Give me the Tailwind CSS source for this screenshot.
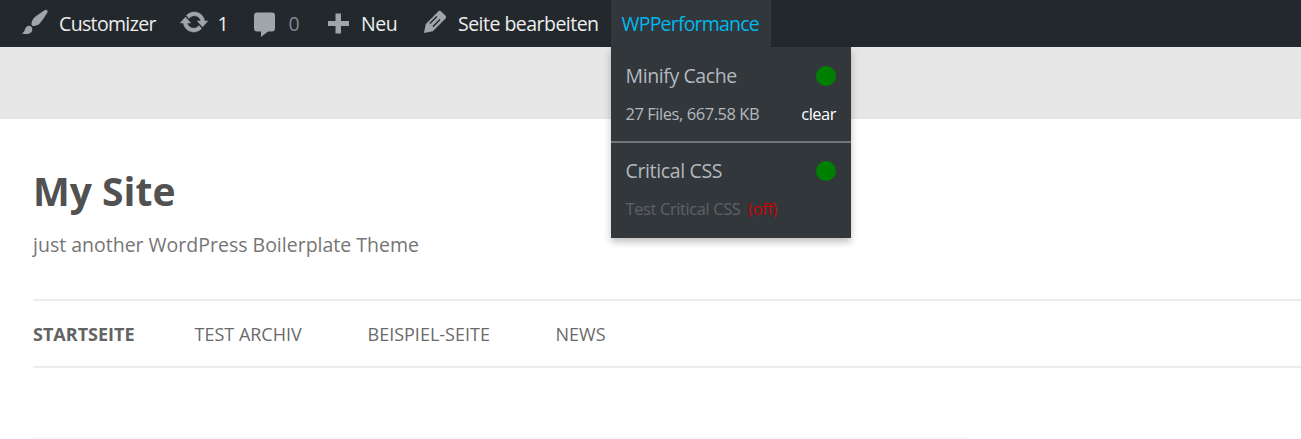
<!DOCTYPE html>
<html lang="de">
<head>
<meta charset="utf-8">
<title>My Site</title>
<script src="https://cdn.jsdelivr.net/npm/@tailwindcss/browser@4"></script>
</head>
<body class="w-[1301px] h-[439px] overflow-hidden bg-[#e6e6e6] font-['Open_Sans',sans-serif] whitespace-nowrap">
<header class="relative z-10 flex h-[47px] bg-[#23282d] text-[19.5px] leading-[49px] text-[#eeeeee]">
  <a class="flex w-[159px] pl-[20px] items-center">
    <svg class="w-[30px] h-[30px] mr-[9px] -mt-[3px] shrink-0 fill-[#a0a5aa]" viewBox="0 0 20 20"><path d="M18.33 3.57s.27-.8-.31-1.36c-.53-.52-1.22-.24-1.22-.24-.61.3-5.76 3.47-7.67 5.57-.86.96-2.06 3.79-1.09 4.82.92.98 3.96-.17 4.79-1 2.06-2.06 5.21-7.17 5.5-7.79zM1.4 17.65c2.37-1.56 1.46-3.41 3.23-4.64.93-.65 2.22-.62 3.08.29.63.67.8 2.57-.16 3.46-1.57 1.45-4 1.55-6.15.89z"/></svg>
    <span class="tracking-[-0.65px]">Customizer</span>
  </a>
  <a class="flex w-[92px] pl-[19.5px] items-center">
    <svg class="w-[30px] h-[30px] mr-[9px] -mt-[3px] shrink-0 fill-[#a0a5aa]" viewBox="0 0 20 20"><path stroke="#a0a5aa" stroke-width=".3" d="M10.2 3.28c3.53 0 6.43 2.61 6.92 6h2.08l-3.5 4-3.5-4h2.32c-.45-1.97-2.21-3.45-4.32-3.45-1.45 0-2.73.71-3.54 1.78L4.95 5.66C6.23 4.2 8.11 3.28 10.2 3.28zm-.4 13.44c-3.52 0-6.43-2.61-6.92-6H.8l3.5-4c1.17 1.33 2.33 2.67 3.5 4H5.48c.45 1.97 2.21 3.45 4.32 3.45 1.45 0 2.73-.71 3.54-1.78l1.71 1.95c-1.28 1.46-3.15 2.38-5.25 2.38z"/></svg>
    <span>1</span>
  </a>
  <a class="flex w-[72px] items-center">
    <svg class="w-[26px] h-[30px] mr-[11.5px] shrink-0 fill-[#a0a5aa]" viewBox="0 0 26 30"><path d="M6 3.500h15q3 0 3 3v13q0 3-3 3h-4l-7 5.500v-5.500h-4q-3 0-3-3v-13q0-3 3-3z"/></svg>
    <span class="text-[#84878b]">0</span>
  </a>
  <a class="flex w-[94px] items-center">
    <svg class="w-[30px] h-[30px] mr-[9px] -mt-[2px] shrink-0 fill-[#a0a5aa]" viewBox="0 0 30 30"><path d="M12.500 5.500h5.500v7.500h8v5h-8v7.500h-5.500v-7.500h-7.500v-5h7.500z"/></svg>
    <span class="-ml-[1px] tracking-[-0.5px]">Neu</span>
  </a>
  <a class="flex w-[194px] items-center">
    <svg class="w-[32px] h-[32px] ml-[2px] mr-[7px] -mt-[3px] shrink-0" viewBox="0 0 20 20"><path fill="#a0a5aa" d="M13.890 3.390l2.710 2.720c.46.46.42 1.240.03 1.640l-8.010 8.020-5.560 1.160 1.160-5.580s7.600-7.630 7.990-8.030c.39-.39 1.220-.39 1.680.07z"/><path fill="none" stroke="#23282d" stroke-width=".9" d="M6.800 11l4.400-4.400M8.700 12.900l4.400-4.400"/></svg>
    <span class="tracking-[-0.52px]">Seite bearbeiten</span>
  </a>
  <div class="relative w-[160px] bg-[#32373c] pl-[10.5px] leading-[47px] text-[#00b9eb]">
    <span class="tracking-[-0.8px]">WPPerformance</span>
    <section class="absolute left-0 top-[47px] w-[240px] h-[191px] bg-[#32373c] text-[#b4b9be] shadow-[0_4px_7px_rgba(0,0,0,0.25)]">
      <div class="flex h-[59px] items-center justify-between px-[15px]">
        <span class="tracking-[-0.4px] -ml-[0.5px] leading-[28px] -mt-[2px]">Minify Cache</span><i class="-mt-[1px] size-[20px] rounded-full bg-[#008000]"></i>
      </div>
      <div class="flex h-[35px] -mt-[10px] mb-[10px] items-center justify-between px-[15px] text-[16.5px]">
        <span class="tracking-[-0.45px] -ml-[0.5px]">27 Files, 667.58 KB</span><span class="text-white tracking-[-0.5px]">clear</span>
      </div>
      <div class="h-[2px] bg-[#70757a]"></div>
      <div class="flex h-[56px] items-center justify-between px-[15px]">
        <span class="tracking-[-0.35px] -ml-[0.5px] leading-[28px]">Critical CSS</span><i class="size-[20px] rounded-full bg-[#008000]"></i>
      </div>
      <div class="flex h-[35px] -mt-[8px] items-center px-[15px] text-[16.5px] leading-[24px]">
        <span class="w-[122.5px] text-[#5e6267] tracking-[-0.4px] -ml-[0.5px]">Test Critical CSS</span><span class="text-[#cc0000] tracking-[-0.4px]">(off)</span>
      </div>
    </section>
  </div>
</header>
<main class="mt-[72px] h-[320px] pl-[33px] bg-white">
  <h1 class="pt-[44px] text-[39px] leading-[56px] font-bold text-[#515151]">My Site</h1>
  <p class="mt-[11px] text-[19.500px] leading-[30px] text-[#757575]">just another WordPress Boilerplate Theme</p>
  <nav class="mt-[39px] flex h-[69px] border-y-2 border-[#ededed] text-[18px] leading-[66px] text-[#6a6a6a]">
    <a class="w-[161.5px] font-bold text-[#636363]">STARTSEITE</a>
    <a class="w-[173px]">TEST ARCHIV</a>
    <a class="w-[188px]">BEISPIEL-SEITE</a>
    <a>NEWS</a>
  </nav>
  <div class="mt-[69px] w-[935px] h-[10px] bg-[#f9f9f9]"></div>
</main>
</body>
</html>
